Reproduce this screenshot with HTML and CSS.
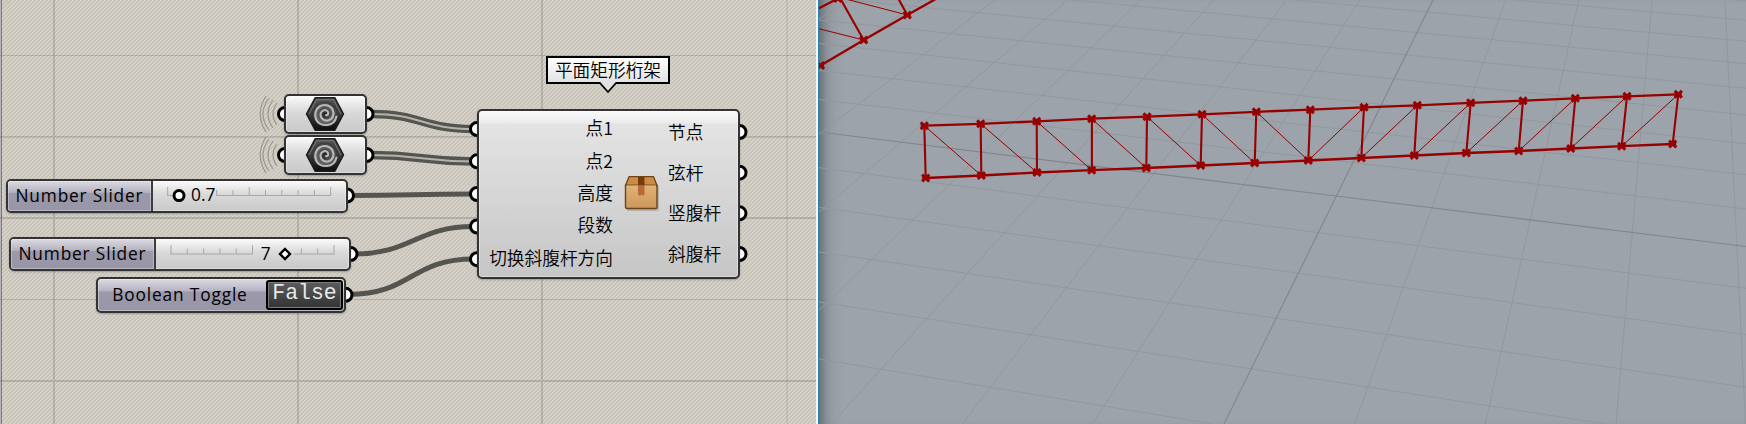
FILE: index.html
```html
<!DOCTYPE html>
<html lang="zh-CN">
<head>
    <meta charset="UTF-8">
    <title>平面矩形桁架</title>
    <link rel="stylesheet" href="styles.css">
</head>
<body>
    <div class="workspace">
        <div class="canvas">
            <!-- wires and grips, drawn under the nodes -->
            <svg class="wires" width="816" height="424" viewBox="0 0 816 424">
                <g class="canvas-grid">
                    <path d="M54 0V424M298 0V424M542 0V424M0 136.8H816M0 218H816M0 381H816" stroke-width="1.8"/>
                    <path d="M787 0V424M0 55.5H816M0 299.5H816" stroke-width="1"/>
                </g>
                <g class="wave">
                    <path d="M277 103Q269 114 277 125M273 100Q263 114 273 128M269 98Q257 114 269 130M266 96Q254.500 114 266 132"/>
                    <path d="M277 144Q269 155 277 166M273 141Q263 155 273 169M269 139Q257 155 269 171M266 137Q254.500 155 266 173"/>
                </g>
                <g class="wire">
                    <path d="M370 114C422 114 422 129 474 129" stroke-width="8.400"/>
                    <path d="M370 155C422 155 422 161.500 474 161.500" stroke-width="8.400"/>
                    <path d="M350 195.500C412 195.500 412 194 474 194" stroke-width="5"/>
                    <path d="M354 254C412 254 416 226.500 474 226.500" stroke-width="5"/>
                    <path d="M348 294.500C412 294.500 410 259 474 259" stroke-width="5"/>
                </g>
                <g class="wire-gap">
                    <path d="M370 114C422 114 422 129 474 129"/>
                    <path d="M370 155C422 155 422 161.500 474 161.500"/>
                </g>
                <g class="grip">
                    <circle cx="285" cy="114" r="6.500"/>
                    <circle cx="285" cy="155" r="6.500"/>
                    <circle cx="366.500" cy="114" r="6.500"/>
                    <circle cx="366.500" cy="155" r="6.500"/>
                    <circle cx="347" cy="195.500" r="6.500"/>
                    <circle cx="350.500" cy="254" r="6.500"/>
                    <circle cx="345.500" cy="294.800" r="6.500"/>
                    <circle cx="477" cy="129" r="6.500"/>
                    <circle cx="477" cy="161.300" r="6.500"/>
                    <circle cx="477" cy="194" r="6.500"/>
                    <circle cx="477" cy="226.500" r="6.500"/>
                    <circle cx="477" cy="259.200" r="6.500"/>
                    <circle cx="739.500" cy="132" r="6.500"/>
                    <circle cx="739.500" cy="172.700" r="6.500"/>
                    <circle cx="739.500" cy="213.300" r="6.500"/>
                    <circle cx="739.500" cy="254" r="6.500"/>
                </g>
            </svg>

            <div class="node param param-1">
                <svg width="40" height="36" viewBox="-20 -18 40 36">
                    <defs>
                        <linearGradient id="hexFill" x1="0" y1="0" x2="0" y2="1">
                            <stop offset="0" stop-color="#555"/>
                            <stop offset="0.5" stop-color="#3a3a3a"/>
                            <stop offset="1" stop-color="#0c0c0c"/>
                        </linearGradient>
                        <radialGradient id="discFill">
                            <stop offset="0" stop-color="#222"/>
                            <stop offset="0.7" stop-color="#666"/>
                            <stop offset="1" stop-color="#333"/>
                        </radialGradient>
                        <g id="spiral">
                            <path d="M-18.500 0L-9.700 -16.300H9.700L18.500 0L9.700 16.300H-9.700Z" fill="url(#hexFill)" stroke="#1c1c1c" stroke-width="1.500" stroke-linejoin="round"/>
                            <path d="M-16 0L-8.500 -14.300H8.500L16 0" fill="none" stroke="#777" stroke-width="1"/>
                            <circle r="12.300" fill="url(#discFill)"/>
                            <path d="M1 1C3 2 4 -1 2.500 -2.800C0 -5.500 -4.600 -3 -4.500 .8C-4.300 5.300 0 7.400 3.600 6.300C8.200 5 9.500 -.5 7.500 -4.500C5.300 -9 -1.200 -10.300 -5.500 -7.500C-9.500 -4.800 -10.800 .5 -9 5.200C-7.200 9.200 -2.500 11.400 2 11C7 10.500 10.500 7 11.500 2.500" fill="none" stroke="#b8b8b8" stroke-width="2.100" stroke-linecap="round"/>
                        </g>
                    </defs>
                    <use href="#spiral"/>
                </svg>
            </div>
            <div class="node param param-2">
                <svg width="40" height="36" viewBox="-20 -18 40 36"><use href="#spiral"/></svg>
            </div>

            <div class="node slider slider-1">
                <div class="node-name">Number Slider</div>
                <svg class="track" width="193" height="30" viewBox="153 181 193 30">
                    <path class="ticks" d="M167.700 195.500H172M216 195.500H330.700M167.700 187V196M216.600 190V196M232.900 190V196M249.200 187V196M265.500 190V196M281.800 190V196M298.100 190V196M314.400 190V196M330.700 187V196"/>
                    <circle cx="179" cy="195.600" r="5" fill="#fff" stroke="#000" stroke-width="3"/>
                    <text x="191" y="201">0.7</text>
                </svg>
            </div>
            <div class="node slider slider-2">
                <div class="node-name">Number Slider</div>
                <svg class="track" width="193" height="30" viewBox="156 239 193 30">
                    <path class="ticks" d="M171 254H252.500M294 254H334M171 245V255M187.300 248.500V254M203.600 248.500V254M219.900 248.500V254M236.200 248.500V254M252.500 245V254M301.400 248.500V254M317.700 248.500V254M334 245V255"/>
                    <path d="M285 249L290 254L285 259L280 254Z" fill="#fff" stroke="#000" stroke-width="2.400"/>
                    <text x="260.800" y="259.500">7</text>
                </svg>
            </div>

            <div class="node toggle">
                <div class="node-name">Boolean Toggle</div>
                <div class="toggle-value">False</div>
            </div>

            <div class="node component">
                <div class="inputs">
                    <span>点1</span>
                    <span>点2</span>
                    <span>高度</span>
                    <span>段数</span>
                    <span>切换斜腹杆方向</span>
                </div>
                <svg class="box-icon" width="38" height="38" viewBox="0 0 38 38">
                    <defs>
                        <linearGradient id="boxFill" x1="0" y1="0" x2="0" y2="1">
                            <stop offset="0" stop-color="#e2b278"/>
                            <stop offset="1" stop-color="#cb965a"/>
                        </linearGradient>
                    </defs>
                    <path d="M5 2.800H30L35 12V34Q35 36 33 36H4Q2.500 36 2.500 34V12Z" fill="#777" opacity=".35"/>
                    <path d="M5 1.700H29.500L33 10.500H1.500Z" fill="#d08b42" stroke="#6e4317" stroke-width="1.300" stroke-linejoin="round"/>
                    <path d="M1.500 10.500H33V32Q33 33.500 31.500 33.500H3Q1.500 33.500 1.500 32Z" fill="url(#boxFill)" stroke="#6e4317" stroke-width="1.400"/>
                    <path d="M2.500 11H32" stroke="#f2d6ab" stroke-width="1"/>
                    <path d="M14 2H20.500V10.500H14Z" fill="#753b10"/>
                    <path d="M14 10.500H20.500V19L19 21L17.500 19.500L16 21L14 19.500Z" fill="#b96a34"/>
                </svg>
                <div class="outputs">
                    <span>节点</span>
                    <span>弦杆</span>
                    <span>竖腹杆</span>
                    <span>斜腹杆</span>
                </div>
            </div>

            <div class="balloon">
                平面矩形桁架
                <svg class="balloon-tip" width="20" height="12" viewBox="0 0 20 12">
                    <path d="M1 0L10 10L19 0" fill="#e2e2e2" stroke="#000" stroke-width="1.800"/>
                </svg>
            </div>
        </div>

        <div class="viewport">
            <svg width="927" height="424" viewBox="819 0 927 424">
                <defs>
                    <marker id="pt" viewBox="-5 -5 10 10" markerWidth="10" markerHeight="10" markerUnits="userSpaceOnUse">
                        <path d="M-3.600 -3.400L3.600 3.400M-3.600 3.400L3.600 -3.400M-3.500 0H3.500" stroke="#960000" stroke-width="3"/>
                    </marker>
                </defs>
                <g class="ground">
                    <path d="M819 167.700L1273 226.700L1746 288.400M819 207.300L1273 269.700L1746 334.700M819 252L1273 317.700L1746 387.300M819 302L1273 372.300L1606 424M819 359L1213 424"/>
                    <path d="M819 99.500L1746 209M819 70.500L1746 174.700M819 43.500L1746 143.700M819 20L1746 115M819 -3L1746 88.300M819 -24L1746 63.700M1273 -2L1746 41.300M1516 0L1746 20.300M1712 -2L1746 1"/>
                    <path d="M1505.700 0L1354.700 424M1578.700 0L1485.300 424M1652 0L1616 424M1725 0L1745.500 424"/>
                    <path d="M1359.700 0L1092.700 424M1286.500 0L962.300 424M1214 0L831.700 424M1140.700 0L701 424M1067.700 0L570.600 424M994.700 0L440 424M921.700 0L310 424M849 0L180 424"/>
                </g>
                <path class="axis" d="M819 132L1273 188.200L1746 246.500M1433 0L1224 424"/>

                <!-- second truss, cut off by the corner of the view -->
                <path class="chord" d="M794 80L820.500 65.500L863.700 40L907.300 15L950 -9M800 18L838 -1.500L870 -20"/>
                <path class="post" d="M840 -2L863.700 40M898 -2L907.300 15"/>
                <path class="brace" d="M800 24L863.700 40M838 -3L907.300 15"/>

                <!-- main truss -->
                <path class="chord" d="M924.300 125.700L980.700 123.800L1036.700 121.300L1091.700 118.700L1147 116.700L1202 114.300L1256.300 111.800L1310.300 109.700L1364 107.300L1417.300 105.300L1470.700 102.800L1523 100.700L1575.300 98.300L1627 96.300L1678.300 94.300"/>
                <path class="chord" d="M925.700 178L981.300 175.500L1037 172.500L1091.700 170.200L1146.300 168L1200.700 165.500L1254.700 163L1308.300 160.500L1361.300 158L1414.300 155.500L1466.300 153L1518.700 151L1570.700 148.500L1621.700 146.200L1672.700 144"/>
                <path class="post" d="M924.300 125.700L925.700 178M980.700 123.800L981.300 175.500M1036.700 121.300L1037 172.500M1091.900 118.700V170.200M1147 116.700L1146.300 168M1202 114.300L1200.700 165.500M1256.300 111.800L1254.700 163M1310.300 109.700L1308.300 160.500M1364 107.300L1361.300 158M1417.300 105.300L1414.300 155.500M1470.700 102.800L1466.300 153M1523 100.700L1518.700 151M1575.300 98.300L1570.700 148.500M1627 96.300L1621.700 146.200M1678.300 94.300L1672.700 144"/>
                <path class="brace" d="M924.300 125.700L981.300 175.500M980.700 123.800L1037 172.500M1036.700 121.300L1091.700 170.200M1091.700 118.700L1146.300 168M1147 116.700L1200.700 165.500M1202 114.300L1254.700 163M1256.300 111.800L1308.300 160.500M1308.300 160.500L1364 107.300M1361.300 158L1417.300 105.300M1414.300 155.500L1470.700 102.800M1466.300 153L1523 100.700M1518.700 151L1575.300 98.300M1570.700 148.500L1627 96.300M1621.700 146.200L1678.300 94.300"/>
            </svg>
        </div>
    </div>
</body>
</html>
```
FILE: styles.css
```css
body {
    margin: 0;
    font-family: "Open Sans", "Noto Sans CJK SC", sans-serif;
    color: #000;
}
svg {
    display: block;
}
.workspace {
    display: flex;
    width: 1746px;
    height: 424px;
    overflow: hidden;
}

/* node canvas */
.canvas {
    position: relative;
    flex: 0 0 816px;
    box-sizing: border-box;
    background: repeating-linear-gradient(135deg, #d5d1c8 0, #d5d1c8 1.41px, #c8c4ba 1.41px, #c8c4ba 2.83px);
    box-shadow: inset 1px 0 0 #b5b5b8, inset 2px 0 0 #77777c;
}
.canvas-grid {
    stroke: rgba(90, 85, 75, 0.24);
    fill: none;
}
.wave {
    fill: none;
    stroke: rgba(90, 88, 80, 0.45);
    stroke-width: 1.2;
}
.wire {
    fill: none;
    stroke: #555550;
}
.wire-gap {
    fill: none;
    stroke: #b5b3aa;
    stroke-width: 2;
}
.grip {
    fill: #fff;
    stroke: #000;
    stroke-width: 3;
}
.node {
    position: absolute;
    display: flex;
    box-sizing: border-box;
    border: 2px solid #333;
    border-radius: 5px;
    background: linear-gradient(#fafafa, #d9d9d9 45%, #c9c9c9);
    box-shadow: inset 0 0 0 1px rgba(255, 255, 255, 0.35), 0 1px 2px rgba(0, 0, 0, 0.25);
}
.param {
    left: 284px;
    width: 83px;
    height: 40px;
    padding-right: 1px;
    align-items: center;
    justify-content: center;
}
.param-1 {
    top: 94px;
}
.param-2 {
    top: 135px;
}
.slider {
    width: 342px;
    height: 34px;
}
.slider-1 {
    left: 6px;
    top: 179px;
}
.slider-2 {
    left: 9px;
    top: 237px;
}
.node-name {
    display: flex;
    align-items: center;
    justify-content: center;
    font-size: 17.3px;
    letter-spacing: 0.85px;
    white-space: nowrap;
}
.slider .node-name {
    flex: 0 0 145px;
    box-sizing: border-box;
    padding-bottom: 1px;
    border-right: 2px solid #3c3c3c;
    border-radius: 3px 0 0 3px;
    background: linear-gradient(#dcdbe2, #b4b2c0 38%, #9b99aa 40%, #9896a6);
    box-shadow: inset 0 0 0 1px rgba(255, 255, 255, 0.3);
}
.track {
    flex: none;
}
.track text {
    font-size: 17.3px;
}
.ticks {
    fill: none;
    stroke: #a8a8a8;
    stroke-width: 1;
}
.toggle {
    left: 96px;
    top: 277px;
    width: 250px;
    height: 36px;
    padding: 1px 1px 1px 0;
    background: linear-gradient(#dcdbe2, #b4b2c0 38%, #9b99aa 40%, #9896a6);
}
.toggle .node-name {
    flex: 1;
    padding: 0 4px 1px 0;
}
.toggle-value {
    flex: 0 0 77px;
    box-sizing: border-box;
    border: 2px solid #000;
    border-radius: 3px;
    background: linear-gradient(#5c5c5c, #333);
    box-shadow: inset 0 0 0 1px #7a7a7a;
    color: #e8e8e8;
    font-family: "Liberation Mono", monospace;
    font-size: 21.5px;
    line-height: 23px;
    text-align: center;
}
.component {
    left: 477px;
    top: 109px;
    width: 263px;
    height: 170px;
    padding: 0 0 4px;
    align-items: center;
    background: linear-gradient(#fafafa, #ebebeb 12px, #e3e3e3 13px, #c6c6c6);
    font-family: "Noto Sans CJK SC", sans-serif;
    font-size: 17.7px;
    font-weight: 350;
    line-height: 20px;
}
.inputs,
.outputs {
    display: grid;
    align-self: stretch;
    align-items: center;
    grid-auto-rows: 1fr;
}
.inputs {
    flex: 0 0 134px;
    text-align: right;
    white-space: nowrap;
}
.box-icon {
    flex: none;
    margin: 3px 6px 0 11px;
}
.balloon {
    position: absolute;
    left: 546px;
    top: 56px;
    width: 124px;
    height: 28px;
    box-sizing: border-box;
    border: 2px solid #000;
    background: linear-gradient(#fff, #e2e2e2);
    font-family: "Noto Sans CJK SC", sans-serif;
    font-size: 17.7px;
    font-weight: 350;
    line-height: 22px;
    text-align: center;
}
.balloon-tip {
    position: absolute;
    left: 50px;
    top: 24px;
}

/* perspective view */
.viewport {
    flex: 1;
    border-left: 2px solid #f4f6f6;
    box-shadow: inset 1px 0 0 #2f82a5, inset 9px 0 9px -7px rgba(40, 45, 55, 0.4), inset 22px 0 18px -16px rgba(40, 45, 55, 0.35);
    background: #9da3aa;
    overflow: hidden;
}
.viewport svg {
    margin-left: 1px;
}
.ground {
    fill: none;
    stroke: #91989d;
    stroke-width: 1;
}
.axis {
    fill: none;
    stroke: #85858c;
    stroke-width: 1.1;
}
.chord,
.post,
.brace {
    fill: none;
    stroke: #960000;
}
.chord {
    stroke-width: 2.3;
    marker-start: url(#pt);
    marker-mid: url(#pt);
    marker-end: url(#pt);
}
.post {
    stroke-width: 2.1;
}
.brace {
    stroke-width: 1;
}
```
